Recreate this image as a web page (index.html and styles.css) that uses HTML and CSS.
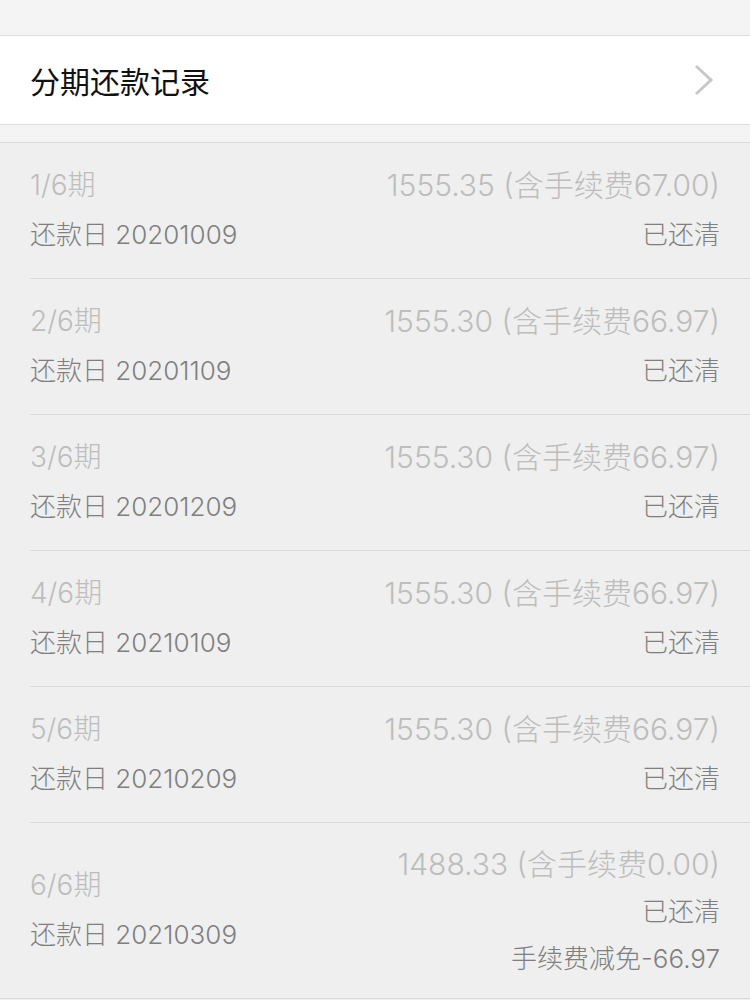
FILE: index.html
```html
<!DOCTYPE html>
<html lang="zh-CN">
<head>
<meta charset="utf-8">
<title>分期还款记录</title>
<link rel="stylesheet" href="styles.css">
</head>
<body>
<div class="gap-top"></div>
<div class="header">
  <span class="title">分期还款记录</span>
  <svg class="chevron" width="20" height="32" viewBox="0 0 20 32"><path d="M2 2 L17 16 L2 30" fill="none" stroke="#c8c8c8" stroke-width="3"/></svg>
</div>
<div class="gap-mid"></div>
<div class="list">
  <div class="row">
    <div class="col left"><div class="l1">1/6期</div><div class="l2">还款日 20201009</div></div>
    <div class="col right"><div class="l1">1555.35 (含手续费67.00)</div><div class="l2">已还清</div></div>
  </div>
  <div class="row">
    <div class="col left"><div class="l1">2/6期</div><div class="l2">还款日 20201109</div></div>
    <div class="col right"><div class="l1">1555.30 (含手续费66.97)</div><div class="l2">已还清</div></div>
  </div>
  <div class="row">
    <div class="col left"><div class="l1">3/6期</div><div class="l2">还款日 20201209</div></div>
    <div class="col right"><div class="l1">1555.30 (含手续费66.97)</div><div class="l2">已还清</div></div>
  </div>
  <div class="row">
    <div class="col left"><div class="l1">4/6期</div><div class="l2">还款日 20210109</div></div>
    <div class="col right"><div class="l1">1555.30 (含手续费66.97)</div><div class="l2">已还清</div></div>
  </div>
  <div class="row">
    <div class="col left"><div class="l1">5/6期</div><div class="l2">还款日 20210209</div></div>
    <div class="col right"><div class="l1">1555.30 (含手续费66.97)</div><div class="l2">已还清</div></div>
  </div>
  <div class="row last">
    <div class="col left"><div class="l1">6/6期</div><div class="l2">还款日 20210309</div></div>
    <div class="col right"><div class="l1">1488.33 (含手续费0.00)</div><div class="l2">已还清</div><div class="l2">手续费减免-66.97</div></div>
  </div>
</div>
</body>
</html>
```

FILE: styles.css
```css
html, body {
  margin: 0;
  padding: 0;
  background: #efefef;
  font-family: Inter, "Noto Sans CJK SC", sans-serif;
}

.gap-top {
  height: 35px;
  background: #f4f4f4;
  border-bottom: 1px solid #dcdcdc;
}

.header {
  height: 88px;
  background: #ffffff;
  border-bottom: 1px solid #dcdcdc;
  display: flex;
  align-items: center;
  justify-content: space-between;
  padding: 0 36px 0 30px;
}

.title {
  font-size: 30px;
  color: #111111;
  font-family: "Noto Sans CJK SC", sans-serif;
}

.chevron {
  display: block;
}

.gap-mid {
  height: 17px;
  background: #f4f4f4;
  border-bottom: 1px solid #dcdcdc;
}

.list {
  background: #efefef;
  border-bottom: 1px solid #dadada;
}

.row {
  margin-left: 30px;
  padding: 18px 30px 19px 0;
  border-bottom: 1px solid #dadada;
  display: flex;
  justify-content: space-between;
}

.row.last {
  border-bottom: none;
  padding-bottom: 16px;
}

.col .l1,
.col .l2 {
  line-height: 49px;
  white-space: nowrap;
}

.right {
  text-align: right;
}

.l1 {
  font-size: 28px;
  font-weight: 300;
  color: #bdbdbd;
}

.right .l1 {
  font-size: 30px;
}

.l2 {
  font-size: 26px;
  font-weight: 300;
  color: #7f7f7f;
}

.row.last .right .l1,
.row.last .right .l2 {
  line-height: 47px;
}

.row.last .left {
  align-self: center;
  margin-top: -4px;
}
```
